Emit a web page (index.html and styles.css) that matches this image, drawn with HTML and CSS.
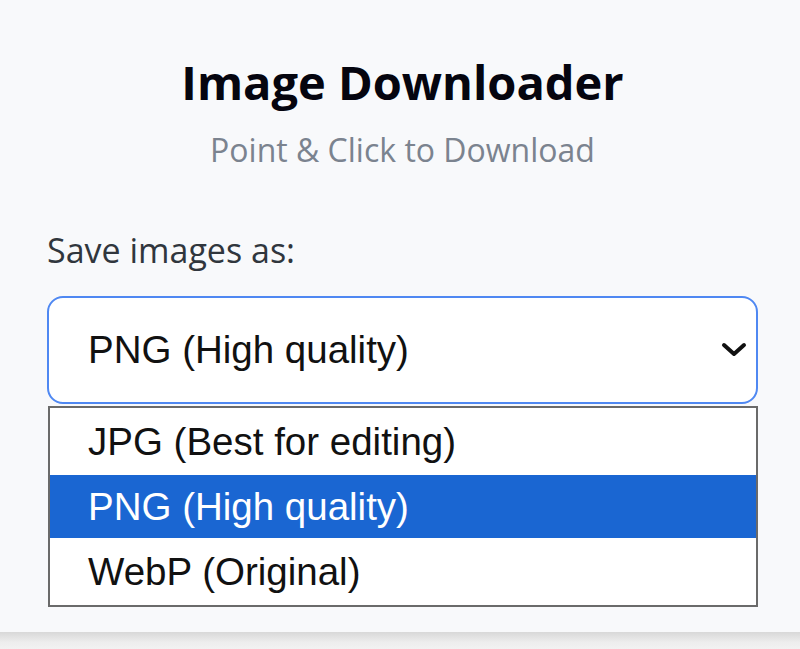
FILE: index.html
```html
<!DOCTYPE html>
<html lang="en">
<head>
<meta charset="utf-8">
<title>Image Downloader</title>
<link rel="stylesheet" href="styles.css">
</head>
<body>
<main class="popup">
  <header class="head">
    <h1 class="title">Image Downloader</h1>
    <p class="subtitle">Point &amp; Click to Download</p>
  </header>
  <div class="field">
    <label class="label">Save images as:</label>
    <div class="select">
      <span class="select-value">PNG (High quality)</span>
      <svg class="chevron" width="26" height="18" viewBox="0 0 26 18"><path d="M3 4 L13 13 L23 4" fill="none" stroke="#111" stroke-width="4" stroke-linecap="round" stroke-linejoin="round"/></svg>
    </div>
    <ul class="options">
      <li class="option">JPG (Best for editing)</li>
      <li class="option selected">PNG (High quality)</li>
      <li class="option">WebP (Original)</li>
    </ul>
  </div>
</main>
<div class="edge"></div>
</body>
</html>
```

FILE: styles.css
```css
* { box-sizing: border-box; }
html, body { margin: 0; padding: 0; }
body {
  background: #f8f9fb;
  width: 800px;
  height: 649px;
  overflow: hidden;
}
.popup {
  height: 632px;
  padding: 50px 42px 0 47px;
  display: flex;
  flex-direction: column;
}
.head {
  text-align: center;
}
.title {
  margin: 0;
  font-family: "Open Sans", "Noto Sans", sans-serif;
  font-weight: 700;
  font-size: 47px;
  line-height: 64px;
  color: #05050f;
}
.subtitle {
  margin: 14px 0 0;
  font-family: "Open Sans", "Noto Sans", sans-serif;
  font-size: 32px;
  line-height: 44px;
  color: #7b838f;
}
.field {
  margin-top: 58px;
  display: flex;
  flex-direction: column;
}
.label {
  font-family: "Open Sans", "Noto Sans", sans-serif;
  font-size: 34px;
  line-height: 40px;
  color: #30363d;
  margin-bottom: 26px;
}
.select {
  height: 108px;
  border: 2px solid #4f88f2;
  border-radius: 16px;
  background: #fff;
  display: flex;
  align-items: center;
  justify-content: space-between;
  padding: 0 9px 0 39px;
}
.select-value {
  font-family: "Liberation Sans", Arial, sans-serif;
  font-size: 38.5px;
  color: #111;
}
.chevron { display: block; }
.options {
  list-style: none;
  margin: 2px 0 0 1px;
  padding: 0;
  width: 710px;
  border: 2px solid #6a6a6a;
  background: #fff;
}
.option {
  height: 67px;
  display: flex;
  align-items: center;
  padding-left: 38px;
  font-family: "Liberation Sans", Arial, sans-serif;
  font-size: 38.5px;
  color: #111;
}
.option.selected {
  background: #1a66d2;
  color: #fff;
  height: 63px;
}
.edge {
  height: 17px;
  background: linear-gradient(#d8d8d8, #ededed 60%, #f2f2f2);
}
```
